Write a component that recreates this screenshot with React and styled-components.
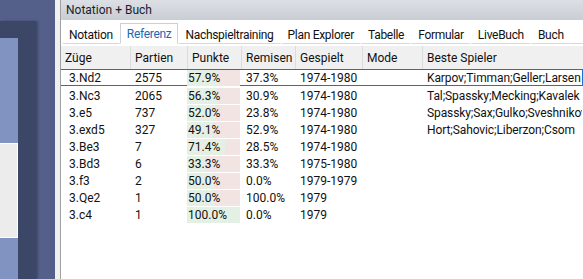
import styled, { createGlobalStyle } from 'styled-components'

const GlobalStyle = createGlobalStyle`
    html, body {
        margin: 0;
        padding: 0;
        width: 583px;
        height: 279px;
        overflow: hidden;
        background: #ffffff;
    }
    body {
        font-family: Roboto, "Liberation Sans", Arial, sans-serif;
        font-size: 12px;
        color: #111;
    }
`

const tabs = ['Notation', 'Referenz', 'Nachspieltraining', 'Plan Explorer', 'Tabelle', 'Formular', 'LiveBuch', 'Buch']

const columns = ['Züge', 'Partien', 'Punkte', 'Remisen', 'Gespielt', 'Mode', 'Beste Spieler']

const rows = [
    { move: '3.Nd2', games: 2575, score: 57.9, draws: '37.3%', years: '1974-1980', players: 'Karpov;Timman;Geller;Larsen' },
    { move: '3.Nc3', games: 2065, score: 56.3, draws: '30.9%', years: '1974-1980', players: 'Tal;Spassky;Mecking;Kavalek' },
    { move: '3.e5', games: 737, score: 52.0, draws: '23.8%', years: '1974-1980', players: 'Spassky;Sax;Gulko;Sveshnikov' },
    { move: '3.exd5', games: 327, score: 49.1, draws: '52.9%', years: '1974-1980', players: 'Hort;Sahovic;Liberzon;Csom' },
    { move: '3.Be3', games: 7, score: 71.4, draws: '28.5%', years: '1974-1980', players: '' },
    { move: '3.Bd3', games: 6, score: 33.3, draws: '33.3%', years: '1975-1980', players: '' },
    { move: '3.f3', games: 2, score: 50.0, draws: '0.0%', years: '1979-1979', players: '' },
    { move: '3.Qe2', games: 1, score: 50.0, draws: '100.0%', years: '1979', players: '' },
    { move: '3.c4', games: 1, score: 100.0, draws: '0.0%', years: '1979', players: '' },
]

export default function App() {
    return (
        <Screen>
            <GlobalStyle />
            <Desktop>
                <DarkPanel>
                    <Strip>
                        <BlueBlock />
                        <GreyBlock />
                        <BlueBlock grow />
                    </Strip>
                </DarkPanel>
            </Desktop>
            <Frame />
            <Window>
                <TitleBar>Notation + Buch</TitleBar>
                <TabBar>
                    {tabs.map((t) => (
                        <Tab key={t} active={t === 'Referenz'}>{t}</Tab>
                    ))}
                    <TabFill />
                </TabBar>
                <Table>
                    <HeadRow>
                        {columns.map((c) => (
                            <HeadCell key={c}>{c}</HeadCell>
                        ))}
                    </HeadRow>
                    {rows.map((r, i) => (
                        <Row key={r.move} selected={i === 0}>
                            <Cell indent>{r.move}</Cell>
                            <Cell>{r.games}</Cell>
                            <ScoreCell>
                                <ScoreBar>
                                    <Win style={{ width: r.score + '%' }} />
                                </ScoreBar>
                                <ScoreText>{r.score.toFixed(1)}%</ScoreText>
                            </ScoreCell>
                            <Cell>{r.draws}</Cell>
                            <Cell>{r.years}</Cell>
                            <Cell></Cell>
                            <Cell tight>{r.players}</Cell>
                        </Row>
                    ))}
                </Table>
            </Window>
        </Screen>
    )
}

const Screen = styled.div`
    display: flex;
    width: 583px;
    height: 279px;
`

const Desktop = styled.div`
    width: 55px;
    flex-shrink: 0;
    background: #55608a;
    padding-top: 21px;
    box-sizing: border-box;
    display: flex;
`

const DarkPanel = styled.div`
    width: 36px;
    background: #3c4767;
    padding-top: 17px;
    box-sizing: border-box;
    display: flex;
    box-shadow: 2px 0 2px rgba(40, 48, 72, 0.5);
`

const Strip = styled.div`
    width: 18px;
    display: flex;
    flex-direction: column;
`

const BlueBlock = styled.div`
    background: #8193c1;
    height: ${(props) => (props.grow ? 'auto' : '105px')};
    flex: ${(props) => (props.grow ? '1' : 'none')};
`

const GreyBlock = styled.div`
    height: 95px;
    background: #ececec;
    border: 1px solid #ffffff;
    border-left: none;
    box-sizing: border-box;
`

const Frame = styled.div`
    width: 5px;
    flex-shrink: 0;
    background: #f0f0f0;
    border-right: 1px solid #a0a0a0;
`

const Window = styled.div`
    flex: 1;
    display: flex;
    flex-direction: column;
    background: #ffffff;
    min-width: 0;
`

const TitleBar = styled.div`
    height: 20px;
    line-height: 21px;
    padding-left: 5px;
    background: linear-gradient(#dcdfe4, #c9cdd4);
    color: #1a1c2a;
`

const TabBar = styled.div`
    height: 24px;
    display: flex;
    align-items: flex-end;
    padding-left: 1px;
    box-sizing: border-box;
`

const Tab = styled.div`
    height: ${(props) => (props.active ? '21px' : '20px')};
    line-height: 20px;
    padding: 0 6px;
    letter-spacing: -0.3px;
    white-space: nowrap;
    box-sizing: border-box;
    color: ${(props) => (props.active ? '#2267b0' : '#111')};
    border: 1px solid ${(props) => (props.active ? '#cdd0d8' : 'transparent')};
    border-bottom: ${(props) => (props.active ? '1px solid #fff' : '1px solid #d6d9e0')};
`

const TabFill = styled.div`
    flex: 1;
    height: 1px;
    background: #d6d9e0;
`

const Table = styled.div`
    margin-top: 2px;
    display: flex;
    flex-direction: column;
`

const grid = `
    display: grid;
    grid-template-columns: 70px 57px 54px 54px 67px 60px 1fr;
`

const HeadRow = styled.div`
    ${grid}
    height: 23px;
    background: #f0f0f0;
`

const HeadCell = styled.div`
    line-height: 24px;
    padding-left: 4px;
    border-right: 1px solid #dcdcdc;
    white-space: nowrap;
    &:last-child {
        border-right: none;
    }
`

const Row = styled.div`
    ${grid}
    height: 17px;
    box-sizing: border-box;
    border: 1px solid ${(props) => (props.selected ? '#1a73d4' : 'transparent')};
    border-left: none;
    padding-top: ${(props) => (props.selected ? '0' : '1px')};
`

const Cell = styled.div`
    line-height: 16px;
    padding-left: ${(props) => (props.indent ? '8px' : '4px')};
    letter-spacing: ${(props) => (props.tight ? '-0.1px' : 'normal')};
    white-space: nowrap;
    overflow: hidden;
`

const ScoreCell = styled.div`
    position: relative;
    margin-left: -1px;
    margin-right: 2px;
`

const ScoreBar = styled.div`
    position: absolute;
    inset: 0 0 0 0;
    background: #f3e4e4;
`

const Win = styled.div`
    height: 100%;
    background: #e4f0e4;
`

const ScoreText = styled.div`
    position: relative;
    line-height: 16px;
    padding-left: 1px;
`
